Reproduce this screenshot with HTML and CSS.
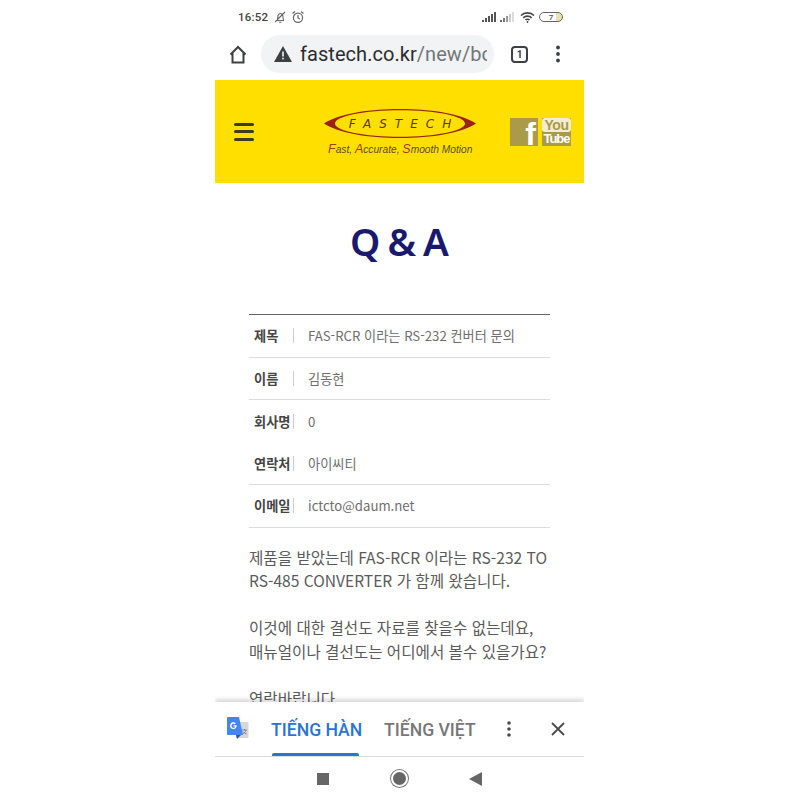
FILE: index.html
```html
<!DOCTYPE html>
<html lang="ko">
<head>
<meta charset="utf-8">
<title>Q &amp; A</title>
<link rel="stylesheet" href="styles.css">
</head>
<body>
<div class="phone">
  <div class="status">
    <span class="time">16:52</span>
    <svg class="st-ico" width="14" height="14" viewBox="0 0 14 14" fill="none" stroke="#666" stroke-width="1.1"><path d="M3 10.5h8M4 10.5c1-1.5.6-3.5 1-5 .4-1.300 1.500-2 2.500-2s2 .8 2.300 2c.3 1.500 0 3.500 1 5M6 12.300h2.500M2 12 12 2"/></svg>
    <svg class="st-ico st-alarm" width="14" height="14" viewBox="0 0 14 14" fill="none" stroke="#666" stroke-width="1.2"><circle cx="7" cy="7.800" r="4.600"/><path d="M7 5v3l2 1M1.500 3.500 4 1.500M12.500 3.500 10 1.500"/></svg>
    <span class="st-spacer"></span>
    <svg class="st-sig" width="15" height="10" viewBox="0 0 15 10" fill="#555"><rect x="0" y="8" width="2" height="2"/><rect x="3" y="6" width="2" height="4"/><rect x="6" y="4" width="2" height="6"/><rect x="9" y="2" width="2" height="8"/><rect x="12" y="0" width="2" height="10"/></svg>
    <svg class="st-sig2" width="15" height="10" viewBox="0 0 15 10"><rect x="0" y="8" width="2" height="2" fill="#666"/><rect x="3" y="6" width="2" height="4" fill="#777"/><rect x="6" y="4" width="2" height="6" fill="#999"/><rect x="9" y="2" width="2" height="8" fill="#ccc"/><rect x="12" y="0" width="2" height="10" fill="#ddd"/></svg>
    <svg class="st-wifi" width="15" height="12" viewBox="0 0 15 12" fill="none" stroke="#444" stroke-width="1.700"><path d="M1 4.500c3.500-3.500 9.500-3.500 13 0M3.300 6.800c2.300-2.200 6-2.200 8.300 0M5.500 9c1-1 3-1 4 0"/><circle cx="7.500" cy="11" r=".9" fill="#444" stroke="none"/></svg>
    <span class="battery"><span class="batt-num">7</span></span>
  </div>

  <div class="toolbar">
    <svg class="tb-home" width="18" height="19" viewBox="0 0 18 19" fill="none" stroke="#3c4043" stroke-width="2"><path d="M1.500 9.500 9 2l7.500 7.500M3.500 8v9.500h11V8"/></svg>
    <div class="omni">
      <svg class="warn" width="18" height="16" viewBox="0 0 18 16"><path d="M9 0 18 16H0Z" fill="#3c4043"/><rect x="8.200" y="5.500" width="1.600" height="5" fill="#f1f3f4"/><rect x="8.200" y="11.700" width="1.600" height="1.700" fill="#f1f3f4"/></svg>
      <span class="url"><span class="url-host">fastech.co.kr</span><span class="url-path">/new/board/view</span></span>
    </div>
    <span class="tab-count">1</span>
    <svg class="tb-menu" width="4" height="18" viewBox="0 0 4 18" fill="#3c4043"><circle cx="2" cy="2.500" r="1.900"/><circle cx="2" cy="9" r="1.900"/><circle cx="2" cy="15.500" r="1.900"/></svg>
  </div>

  <header class="site-head">
    <div class="burger"><i></i><i></i><i></i></div>
    <svg class="logo" width="160" height="50" viewBox="0 0 160 50">
      <path fill-rule="evenodd" fill="#9c2216" d="M4 14.500C18 5 48 0 80 0s62 5 76 14.500C142 24 112 29 80 29S18 24 4 14.500ZM15 14.500C15 22 45 27.800 80 27.800s65-5.800 65-13.300S115 1.200 80 1.200 15 7 15 14.500Z"/>
      <text class="logo-name" x="84" y="19">FASTECH</text>
      <text class="logo-tag" x="8" y="43.500"><tspan class="logo-cap">F</tspan>ast, <tspan class="logo-cap">A</tspan>ccurate, <tspan class="logo-cap">S</tspan>mooth Motion</text>
    </svg>
    <div class="social">
      <span class="fb">f</span>
      <span class="yt"><span class="yt-you">You</span><span class="yt-tube">Tube</span></span>
    </div>
  </header>

  <main class="content">
    <h1 class="title">Q &amp; A</h1>
    <dl class="info">
      <div class="row line"><dt>제목</dt><dd>FAS-RCR 이라는 RS-232 컨버터 문의</dd></div>
      <div class="row line"><dt>이름</dt><dd>김동현</dd></div>
      <div class="row"><dt>회사명</dt><dd>0</dd></div>
      <div class="row line"><dt>연락처</dt><dd>아이씨티</dd></div>
      <div class="row line"><dt>이메일</dt><dd>ictcto@daum.net</dd></div>
    </dl>
    <div class="body-text">
      <p>제품을 받았는데 FAS-RCR 이라는 RS-232 TO<br>RS-485 CONVERTER 가 함께 왔습니다.</p>
      <p>이것에 대한 결선도 자료를 찾을수 없는데요,<br>매뉴얼이나 결선도는 어디에서 볼수 있을가요?</p>
      <p>연락바랍니다</p>
    </div>
  </main>

  <div class="translate">
    <svg class="gt" width="22" height="24" viewBox="0 0 22 24"><path d="M9 5H20.500a1 1 0 0 1 1 1V20a1 1 0 0 1-1 1H9Z" fill="#d5d7da"/><path d="M1 0H12L16 18H1a1 1 0 0 1-1-1V1a1 1 0 0 1 1-1Z" fill="#4285f4"/><path d="M9 18h5l-4 4Z" fill="#2a56a8"/><path d="M9.500 8.200H6.500v1.300h1.700c-.2.800-.9 1.300-1.700 1.300a2 2 0 1 1 1.300-3.500l1-1a3.400 3.400 0 1 0-2.300 5.800c2 0 3.200-1.400 3.200-3.300Z" fill="#fff"/><path d="M15 13h5M17.500 12v1M19 13c-.5 2-2 3.500-3.500 4M16 14.500c.8 1.200 2 2 3.500 2.500" stroke="#7b7f85" stroke-width=".9" fill="none"/></svg>
    <div class="lang lang-on">TIẾNG HÀN</div>
    <div class="lang lang-off">TIẾNG VIỆT</div>
    <svg class="tr-menu" width="4" height="16" viewBox="0 0 4 16" fill="#4a4a4a"><circle cx="2" cy="2" r="1.800"/><circle cx="2" cy="8" r="1.800"/><circle cx="2" cy="14" r="1.800"/></svg>
    <svg class="tr-close" width="14" height="14" viewBox="0 0 14 14" stroke="#4a4a4a" stroke-width="1.800"><path d="M1 1 13 13M13 1 1 13"/></svg>
  </div>

  <nav class="sysnav">
    <span class="nav-square"></span>
    <span class="nav-circle"></span>
    <svg class="nav-back" width="13" height="14" viewBox="0 0 13 14"><path d="M0 7 13 0V14Z" fill="#666"/></svg>
  </nav>
</div>
</body>
</html>
```
FILE: styles.css
```css
* { box-sizing: border-box; }
html, body { margin: 0; padding: 0; background: #fff; }
body { height: 800px; overflow: hidden; font-family: "Noto Sans CJK KR", "Noto Sans", sans-serif; }

.phone {
  width: 369px;
  height: 800px;
  margin-left: 215px;
  display: flex;
  flex-direction: column;
  overflow: hidden;
  background: #fff;
}

/* status bar */
.status {
  height: 34px;
  flex: none;
  display: flex;
  align-items: center;
  padding: 0 21px 0 23px;
}
.time { font: 500 11.5px Roboto, sans-serif; color: #444; letter-spacing: .2px; width: 35px; }
.st-alarm { margin-left: 4px; }
.st-spacer { flex: 1; }
.st-sig2 { margin-left: 3px; }
.st-wifi { margin-left: 5px; }
.battery {
  width: 24px;
  height: 10px;
  margin-left: 4px;
  border: 1px solid #666;
  border-radius: 5px;
  display: flex;
  align-items: center;
  justify-content: center;
  background: linear-gradient(90deg, #fff 75%, #e9e3b0 75%);
}
.batt-num { font: 500 8px Roboto, sans-serif; color: #555; }

/* browser toolbar */
.toolbar {
  height: 46px;
  flex: none;
  display: flex;
  align-items: center;
  padding: 0 0 6px 14px;
}
.tb-home { flex: none; }
.omni {
  width: 233px;
  height: 38px;
  margin-left: 14px;
  border-radius: 19px;
  background: #f1f3f4;
  display: flex;
  align-items: center;
  padding-left: 13px;
  overflow: hidden;
  flex: none;
}
.warn { flex: none; }
.url {
  margin-left: 8px;
  font: 400 20px Roboto, sans-serif;
  letter-spacing: .05px;
  white-space: nowrap;
  overflow: hidden;
  width: 187px;
  flex: none;
}
.url-host { color: #2b2d30; }
.url-path { color: #72767a; }
.tab-count {
  width: 17px;
  height: 17px;
  margin-left: 17px;
  border: 2px solid #3c4043;
  border-radius: 4px;
  font: 700 10px/13px Roboto, sans-serif;
  color: #3c4043;
  text-align: center;
  flex: none;
}
.tb-menu { margin-left: 28px; flex: none; }

/* site header */
.site-head {
  height: 103px;
  flex: none;
  background: #ffdf00;
  display: flex;
  align-items: center;
  padding: 0 0 0 19px;
}
.burger { width: 20px; display: flex; flex-direction: column; gap: 4.500px; flex: none; }
.burger i { display: block; height: 3px; border-radius: 1.500px; background: #3f3b1d; }
.logo { margin-left: 66px; margin-top: 5px; flex: none; }
.logo-name {
  font: oblique 400 12px "DejaVu Sans", sans-serif;
  letter-spacing: 8px;
  fill: #5a3a12;
  text-anchor: middle;
}
.logo-tag { font: italic 400 10.200px "Liberation Sans", sans-serif; fill: #5c4d1c; }
.logo-cap { font-size: 12.500px; fill: #a83a12; }
.social { display: flex; gap: 4px; margin-left: 30px; margin-top: 1px; flex: none; }
.fb {
  width: 28px;
  height: 28px;
  background: #ab9a4a;
  color: #fff;
  font: 700 32px/33px "Liberation Sans", sans-serif;
  text-align: right;
  padding-right: 2px;
  overflow: hidden;
}
.yt {
  width: 29px;
  height: 28px;
  background: #ab9a4a;
  display: flex;
  flex-direction: column;
  font: 700 15px/14px "Liberation Sans", sans-serif;
}
.yt-you, .yt-tube { height: 14px; display: flex; justify-content: center; white-space: nowrap; }
.yt-you { background: #f3eed2; color: #ab9a4a; border-radius: 3px; font-size: 14px; letter-spacing: -.5px; }
.yt-tube { color: #fff; font-size: 13px; letter-spacing: -1px; }

/* content */
.content { flex: 1; min-height: 0; overflow: hidden; padding: 0 34px; }
.title {
  margin: 31px 0 46px;
  font: 600 38.500px/54px "Noto Sans", sans-serif;
  word-spacing: -3px;
  color: #191970;
  text-align: center;
}
.info { margin: 0; border-top: 1px solid #666; }
.row { height: 42.500px; display: flex; align-items: center; font-size: 13.200px; }
.row.line { border-bottom: 1px solid #ddd; }
.row dt {
  width: 45px;
  height: 15px;
  padding-left: 5px;
  border-right: 1px solid #ccc;
  font-weight: 700;
  line-height: 15px;
  color: #444;
  white-space: nowrap;
  flex: none;
}
.row dd { margin: 0 0 0 14px; color: #6e6e6e; white-space: nowrap; }
.body-text { margin-top: 18px; font-size: 15.600px; line-height: 23.500px; color: #5a5a5a; }
.body-text p { margin: 0 0 23.500px; white-space: nowrap; }

/* translate bar */
.translate {
  height: 55px;
  flex: none;
  position: relative;
  display: flex;
  align-items: center;
  padding: 0 0 0 12px;
  border-bottom: 1px solid #ddd;
  background: #fff;
  box-shadow: 0 -3px 4px rgba(0, 0, 0, .14);
}
.gt { flex: none; }
.lang { font: 500 17.600px/22px Roboto, sans-serif; white-space: nowrap; height: 100%; display: flex; align-items: center; flex: none; padding-top: 2px; }
.lang-on { margin-left: 22px; width: 90px; color: #2a74d2; position: relative; }
.lang-on::after {
  content: "";
  position: absolute;
  left: 1px;
  right: 2px;
  bottom: 0;
  height: 3px;
  border-radius: 2px 2px 0 0;
  background: #2a74d2;
}
.lang-off { margin-left: 23px; width: 90px; color: #777; }
.tr-menu { margin-left: 33px; flex: none; }
.tr-close { margin-left: 40px; flex: none; }

/* system navigation */
.sysnav { height: 43px; flex: none; display: flex; align-items: center; padding: 0 0 0 102px; }
.nav-square { width: 12px; height: 12px; background: #666; flex: none; }
.nav-circle {
  width: 17px;
  height: 17px;
  margin-left: 62px;
  border-radius: 50%;
  background: #666;
  border: 2px solid #fff;
  box-shadow: 0 0 0 1px #777;
  flex: none;
}
.nav-back { margin-left: 61px; flex: none; }
```
